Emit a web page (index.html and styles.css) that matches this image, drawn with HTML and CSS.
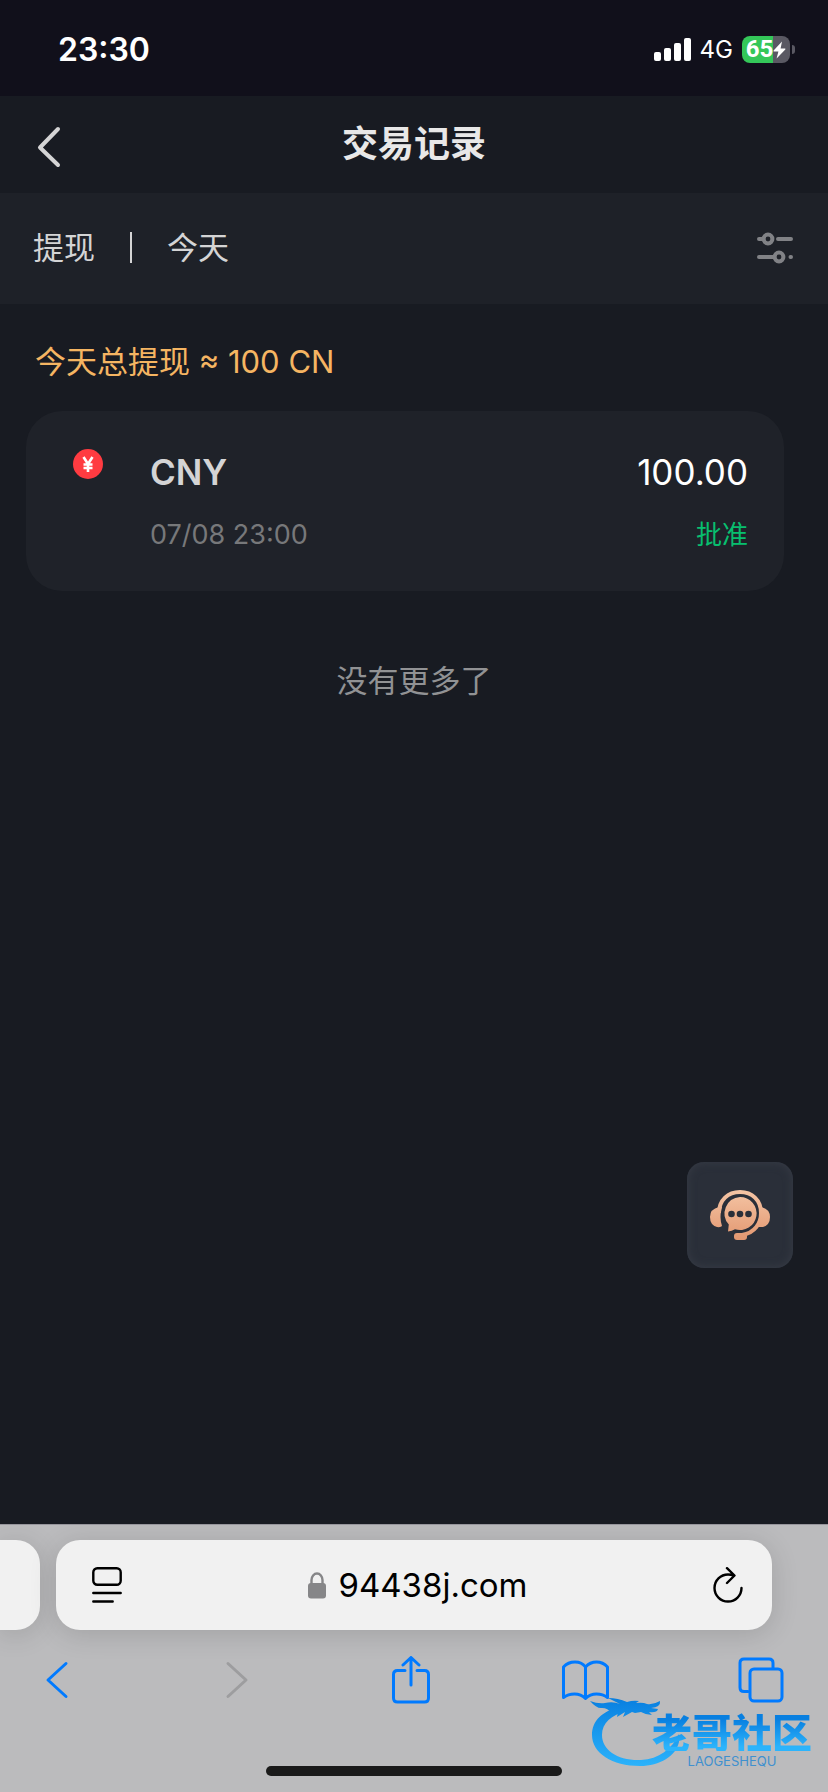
FILE: index.html
```html
<!DOCTYPE html>
<html lang="zh-CN">
<head>
    <meta charset="UTF-8">
    <meta name="viewport" content="width=device-width, initial-scale=1.0">
    <title>交易记录</title>
    <link rel="stylesheet" href="styles.css">
</head>
<body>
    <div class="status-bar">
        <span class="time">23:30</span>
        <div class="status-icons">
            <svg class="signal" width="37" height="23" viewBox="0 0 37 23" fill="#fff">
                <rect x="0" y="14" width="7" height="9" rx="2"/>
                <rect x="10" y="10" width="7" height="13" rx="2"/>
                <rect x="20" y="5" width="7" height="18" rx="2"/>
                <rect x="30" y="0" width="7" height="23" rx="2"/>
            </svg>
            <span class="network">4G</span>
            <div class="battery">
                <span class="battery-level">65</span>
                <svg width="13" height="18" viewBox="0 0 13 18" fill="#fff">
                    <path d="M9 0.5 0.6 9.6q-.5.8.4.9H5.4L3.6 17.5 12.3 8.6q.6-.9-.4-1H7.6z"/>
                </svg>
            </div>
        </div>
    </div>

    <header class="header">
        <button class="back" type="button" aria-label="返回">
            <svg width="24" height="42" viewBox="0 0 24 42" fill="none" stroke="#d4d4d5" stroke-width="4" stroke-linecap="round" stroke-linejoin="round">
                <path d="M21 3 3 21.500 21 39"/>
            </svg>
        </button>
        <h1>交易记录</h1>
    </header>

    <div class="filter-bar">
        <button class="filter" type="button">提现</button>
        <span class="divider"></span>
        <button class="filter" type="button">今天</button>
        <button class="filter-settings" type="button" aria-label="筛选">
            <svg width="36" height="32" viewBox="0 0 36 32" fill="none" stroke="#818286" stroke-width="4" stroke-linecap="round">
                <path d="M2 7h4M21 7h13M2 25h15M33.500 25h.5"/>
                <circle cx="11" cy="7" r="4.400"/>
                <circle cx="22" cy="25" r="4.400"/>
            </svg>
        </button>
    </div>

    <main class="content">
        <p class="summary">今天总提现 ≈ 100 CN</p>

        <article class="card">
            <svg class="coin" width="30" height="30" viewBox="0 0 30 30">
                <circle cx="15" cy="15" r="15" fill="#ff3b41"/>
                <path d="M10.500 8 15 15 19.500 8M15 15v8M10.500 15.500h9M10.500 19h9" fill="none" stroke="#fff" stroke-width="2.600"/>
            </svg>
            <div class="card-body">
                <div class="row">
                    <span class="currency">CNY</span>
                    <span class="amount">100.00</span>
                </div>
                <div class="row">
                    <time class="date">07/08 23:00</time>
                    <span class="state">批准</span>
                </div>
            </div>
        </article>

        <p class="no-more">没有更多了</p>

        <button class="support" type="button" aria-label="客服">
            <svg width="62" height="52" viewBox="0 0 62 52">
                <defs>
                    <linearGradient id="peach" gradientUnits="userSpaceOnUse" x1="0" y1="0" x2="0" y2="52">
                        <stop offset="0" stop-color="#f5c6a6"/>
                        <stop offset="1" stop-color="#e2966f"/>
                    </linearGradient>
                </defs>
                <path d="M10 24C10 11 19 3 31 3s21 8 21 21c0 10-6 20-19 22" fill="none" stroke="url(#peach)" stroke-width="4"/>
                <path d="M10 18h3c-2 7-2 13 0 19q-1 1.500-5 1Q1 36 1 28T10 18zM52 18q9 2 9 10t-7 10h-5c3-6 4-13 3-20z" fill="url(#peach)"/>
                <path d="M31 8a16.500 16.500 0 1 1-5 32.200q-3 1.800-7 2.300l.8-7A16.500 16.500 0 0 1 31 8z" fill="url(#peach)"/>
                <rect x="25" y="44" width="13" height="7" rx="3" fill="url(#peach)"/>
                <g fill="#2a2f39">
                    <circle cx="22.500" cy="25" r="3.300"/>
                    <circle cx="31" cy="25" r="3.300"/>
                    <circle cx="39.500" cy="25" r="3.300"/>
                </g>
            </svg>
        </button>
    </main>

    <footer class="browser">
        <div class="tabs">
            <div class="prev-tab"></div>
            <div class="address-bar">
                <button type="button" aria-label="页面设置">
                    <svg width="30" height="36" viewBox="0 0 30 36" fill="none" stroke="#000" stroke-width="2.400" stroke-linecap="round">
                        <rect x="1.300" y="1.300" width="27.400" height="16.400" rx="4"/>
                        <path d="M1.300 26h27.400M1.300 34.500h19.400"/>
                    </svg>
                </button>
                <button class="url" type="button">
                    <svg width="18" height="27" viewBox="0 0 18 27">
                        <path d="M3.500 13V8a5.500 6.500 0 0 1 11 0v5" fill="none" stroke="#868688" stroke-width="2.400"/>
                        <rect y="11" width="18" height="15.500" rx="3" fill="#868688"/>
                    </svg>
                    94438j.com
                </button>
                <button type="button" aria-label="刷新">
                    <svg width="30" height="36" viewBox="0 0 30 36" fill="none" stroke="#000" stroke-width="2.400" stroke-linecap="round" stroke-linejoin="round">
                        <path d="M28.500 21A13.500 13.500 0 1 1 15 7.500q3 0 6 1M14 1.200 21.500 8.500 14 16"/>
                    </svg>
                </button>
            </div>
        </div>

        <nav class="toolbar">
            <button type="button" aria-label="后退">
                <svg width="48" height="48" viewBox="0 0 48 48"><path d="M33 7.500 15 24 33 40.500"/></svg>
            </button>
            <button type="button" aria-label="前进" disabled>
                <svg width="48" height="48" viewBox="0 0 48 48"><path d="M19 7.500 37 24 19 40.500"/></svg>
            </button>
            <button type="button" aria-label="分享">
                <svg width="48" height="48" viewBox="0 0 48 48"><path d="M20 14.500H12.500q-4 0-4 4V42q0 4 4 4h27q4 0 4-4V18.500q0-4-4-4H32M26 29V1.500M18 9 26 1.500 34 9"/></svg>
            </button>
            <button type="button" aria-label="书签">
                <svg width="48" height="48" viewBox="0 0 48 48"><path d="M24.500 11Q21 6 14 6T2.500 11V41.500Q7 38 13.500 38T24.500 42.500Q29 38 35.500 38T46.500 41.500V11Q42 6 35.500 6T24.500 11zV42"/></svg>
            </button>
            <button type="button" aria-label="标签页">
                <svg width="48" height="48" viewBox="0 0 48 48"><path d="M11 35.500H7q-4 0-4-4V7q0-4 4-4h25q4 0 4 4v5"/><rect x="13" y="13" width="32" height="32" rx="4"/></svg>
            </button>
        </nav>
        <div class="home-indicator"></div>

        <div class="watermark">
            <svg width="90" height="70" viewBox="0 0 90 70">
                <defs>
                    <linearGradient id="sea" gradientUnits="userSpaceOnUse" x1="0" y1="0" x2="0" y2="70">
                        <stop offset="0" stop-color="#087fe0"/>
                        <stop offset="1" stop-color="#2cb4fc"/>
                    </linearGradient>
                </defs>
                <g fill="url(#sea)">
                    <path d="M30 9C12 13 2 23 2 37c0 18 20 31 48 31 20 0 36-10 39-24v-8C82 51 69 61 51 62 28 63 12 52 12 37c0-12 9-20 25-24z"/>
                    <path d="M0 3q8 3 15 2 8-2 15 1L18 0q10 0 19 4 6-2 12-1l-3 2q7-1 11 1 6 1 13-3 1 6-9 7l7 1q-1 4-9 3l3 3q-6 0-11-3l-6 1-3-1-9 5 2-5-8 5 1-5-7 1q-3-5-9-5Q7 11 0 3z"/>
                </g>
            </svg>
            <div class="watermark-text">
                <span class="watermark-name">老哥社区</span>
                <span class="watermark-latin">LAOGESHEQU</span>
            </div>
        </div>
    </footer>
</body>
</html>
```

FILE: styles.css
```css
* {
    box-sizing: border-box;
    margin: 0;
    padding: 0;
}

body {
    display: flex;
    flex-direction: column;
    min-height: 100vh;
    font-family: Inter, "Noto Sans CJK SC", sans-serif;
    background-color: #181b22;
    color: #d4d4d5;
}

button {
    border: none;
    background: none;
    color: inherit;
    font-family: inherit;
    cursor: pointer;
}

svg {
    display: block;
}

/* Status bar */
.status-bar {
    display: flex;
    align-items: center;
    justify-content: space-between;
    height: 96px;
    padding: 3px 33px 0 58px;
    background-color: #11101b;
    color: #fff;
}

.time {
    font-size: 32px;
    font-weight: 600;
}

.status-icons {
    display: flex;
    align-items: center;
    gap: 9px;
}

.network {
    font-size: 24px;
}

.battery {
    position: relative;
    display: flex;
    align-items: center;
    justify-content: center;
    width: 48px;
    height: 27px;
    margin-right: 5px;
    border-radius: 8px;
    background: linear-gradient(to right, #34c759 65%, #5a5963 65%);
}

.battery::after {
    content: "";
    position: absolute;
    right: -5px;
    top: 9px;
    width: 3px;
    height: 9px;
    border-radius: 0 3px 3px 0;
    background-color: #5a5963;
}

.battery-level {
    font-family: Roboto, sans-serif;
    font-size: 24px;
    font-weight: 700;
    line-height: 27px;
}

/* Page header */
.header {
    display: grid;
    grid-template-columns: 1fr auto 1fr;
    align-items: center;
    height: 97px;
    padding: 0 37px 2px;
}

.back {
    justify-self: start;
    padding-top: 6px;
}

h1 {
    font-size: 36px;
    font-weight: 700;
    line-height: 48px;
    color: #e8e8e8;
}

.filter-bar {
    display: flex;
    align-items: center;
    gap: 35px;
    height: 111px;
    padding: 0 35px 2px 33px;
    background-color: #1e2128;
}

.filter {
    font-size: 31px;
    line-height: 48px;
}

.divider {
    width: 2px;
    height: 31px;
    background-color: #d4d4d5;
}

.filter-settings {
    margin-left: auto;
}

/* Records */
.content {
    position: relative;
    flex: 1;
}

.summary {
    padding: 34px 35px 25px;
    font-size: 31px;
    line-height: 48px;
    color: #f5b562;
}

.card {
    display: flex;
    gap: 47px;
    margin: 0 44px 0 26px;
    padding: 37px 36px 38px 47px;
    border-radius: 36px;
    background-color: #1f2229;
}

.coin {
    flex: none;
    margin-top: 1px;
}

.card-body {
    flex: 1;
    display: flex;
    flex-direction: column;
    gap: 21px;
}

.row {
    display: flex;
    align-items: center;
    justify-content: space-between;
}

.currency {
    font-size: 35px;
    font-weight: 600;
    line-height: 48px;
}

.amount {
    font-size: 35px;
    line-height: 48px;
    color: #fff;
}

.date {
    font-size: 27px;
    line-height: 36px;
    color: #77787a;
}

.state {
    font-size: 26px;
    line-height: 36px;
    color: #08bf6f;
}

.no-more {
    margin-top: 66px;
    font-size: 31px;
    line-height: 48px;
    text-align: center;
    color: #919294;
}

.support {
    position: absolute;
    right: 35px;
    bottom: 256px;
    display: flex;
    align-items: center;
    justify-content: center;
    width: 106px;
    height: 106px;
    border-radius: 17px;
    background-color: #2a2f39;
    box-shadow: inset 0 0 10px #383d47;
}

/* Browser controls */
.browser {
    position: relative;
    height: 268px;
    border-top: 1px solid #96959c;
    background-color: #bbbbbd;
    overflow: hidden;
}

.tabs {
    display: flex;
    gap: 16px;
    padding: 15px 56px 0 0;
}

.prev-tab,
.address-bar {
    height: 90px;
    background-color: #f1f1f1;
    box-shadow: 0 4px 28px rgba(0, 0, 0, 0.14);
}

.prev-tab {
    width: 40px;
    border-radius: 0 24px 24px 0;
}

.address-bar {
    flex: 1;
    display: flex;
    align-items: center;
    justify-content: space-between;
    padding: 0 29px 0 36px;
    border-radius: 24px;
}

.url {
    display: flex;
    align-items: center;
    gap: 13px;
    font-size: 33px;
    color: #000;
}

.toolbar {
    display: flex;
    justify-content: space-between;
    padding: 26px 43px 0 33px;
}

.toolbar svg {
    fill: none;
    stroke: #007aff;
    stroke-width: 3;
    stroke-linecap: round;
    stroke-linejoin: round;
}

.toolbar button:disabled svg {
    stroke: #9d9d9f;
}

.home-indicator {
    width: 296px;
    height: 10px;
    margin: 62px auto 0;
    border-radius: 5px;
    background-color: #1a1a1a;
}

/* Community watermark laid over the toolbar */
.watermark {
    position: absolute;
    right: 16px;
    bottom: 24px;
    display: flex;
    align-items: flex-end;
}

.watermark-text {
    display: flex;
    flex-direction: column;
    align-items: center;
    gap: 4px;
    margin-left: -28px;
}

.watermark-name {
    font-family: "Noto Sans CJK SC", sans-serif;
    font-size: 40px;
    font-weight: 900;
    line-height: 40px;
    background: linear-gradient(#087fe0 20%, #2cb4fc 90%);
    background-clip: text;
    -webkit-background-clip: text;
    color: transparent;
}

.watermark-latin {
    font-size: 13px;
    line-height: 13px;
    color: #3f90cf;
}
```
